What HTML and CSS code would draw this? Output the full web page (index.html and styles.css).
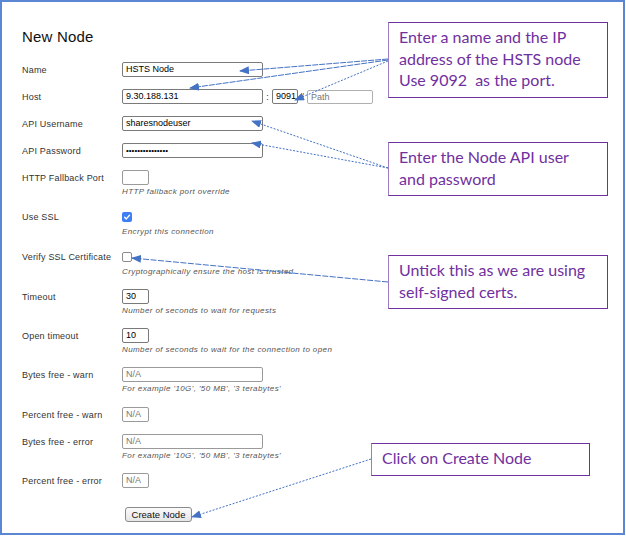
FILE: index.html
```html
<!DOCTYPE html>
<html>
<head>
<meta charset="utf-8">
<link rel="stylesheet" href="styles.css">
</head>
<body>
<div class="frame">
  <h1 class="title">New Node</h1>
  <form class="form">
    <div class="row">
      <label class="lbl">Name</label>
      <div class="ctl"><span class="inp wide">HSTS Node</span></div>
    </div>
    <div class="row">
      <label class="lbl">Host</label>
      <div class="ctl host">
        <span class="inp wide">9.30.188.131</span>
        <span class="sep">:</span>
        <span class="inp port">9091</span>
        <span class="sep">/</span>
        <span class="inp path ph">Path</span>
      </div>
    </div>
    <div class="row">
      <label class="lbl">API Username</label>
      <div class="ctl"><span class="inp wide">sharesnodeuser</span></div>
    </div>
    <div class="row">
      <label class="lbl">API Password</label>
      <div class="ctl"><span class="inp wide pw">•••••••••••••••</span></div>
    </div>
    <div class="row gap-lg">
      <label class="lbl">HTTP Fallback Port</label>
      <div class="ctl"><span class="inp small light"></span></div>
      <div class="hint">HTTP fallback port override</div>
    </div>
    <div class="row gap-lg">
      <label class="lbl">Use SSL</label>
      <div class="ctl"><span class="cb checked"><svg viewBox="0 0 10 10" width="10" height="10"><path d="M2.6 5.2 L4.3 6.9 L7.5 3.2" fill="none" stroke="#fff" stroke-width="1.4" stroke-linecap="round" stroke-linejoin="round"/></svg></span></div>
      <div class="hint hint-cb">Encrypt this connection</div>
    </div>
    <div class="row">
      <label class="lbl">Verify SSL Certificate</label>
      <div class="ctl"><span class="cb"></span></div>
      <div class="hint hint-cb">Cryptographically ensure the host is trusted</div>
    </div>
    <div class="row">
      <label class="lbl">Timeout</label>
      <div class="ctl"><span class="inp small">30</span></div>
      <div class="hint">Number of seconds to wait for requests</div>
    </div>
    <div class="row">
      <label class="lbl">Open timeout</label>
      <div class="ctl"><span class="inp small">10</span></div>
      <div class="hint">Number of seconds to wait for the connection to open</div>
    </div>
    <div class="row gap-md">
      <label class="lbl">Bytes free - warn</label>
      <div class="ctl"><span class="inp wide light ph">N/A</span></div>
      <div class="hint">For example '10G', '50 MB', '3 terabytes'</div>
    </div>
    <div class="row">
      <label class="lbl">Percent free - warn</label>
      <div class="ctl"><span class="inp small light ph">N/A</span></div>
    </div>
    <div class="row">
      <label class="lbl">Bytes free - error</label>
      <div class="ctl"><span class="inp wide light ph">N/A</span></div>
      <div class="hint">For example '10G', '50 MB', '3 terabytes'</div>
    </div>
    <div class="row gap-xl">
      <label class="lbl">Percent free - error</label>
      <div class="ctl"><span class="inp small light ph">N/A</span></div>
    </div>
    <div class="actions">
      <button type="button" class="btn">Create Node</button>
    </div>
  </form>

  <div class="callout c1">Enter a name and the IP<br>address of the HSTS node<br>Use 9092&nbsp; as the port.</div>
  <div class="callout c2">Enter the Node API user<br>and password</div>
  <div class="callout c3">Untick this as we are using<br>self-signed certs.</div>
  <div class="callout c4">Click on Create Node</div>

  <svg class="arrows" width="626" height="536" viewBox="0 0 626 536">
    <defs>
      <marker id="ah" markerWidth="10" markerHeight="8" refX="9" refY="4" orient="auto" markerUnits="userSpaceOnUse">
        <path d="M0 0 L10 4 L0 8 Z" fill="#4472c4"/>
      </marker>
    </defs>
    <g stroke="#4472c4" stroke-width="1" fill="none" marker-end="url(#ah)">
      <line x1="388" y1="59" x2="240" y2="71" stroke-dasharray="6 1"/>
      <line x1="388" y1="60" x2="190" y2="88" stroke-dasharray="6 1"/>
      <line x1="388" y1="61" x2="295" y2="100" stroke-dasharray="2 1.5"/>
      <line x1="388" y1="168" x2="252" y2="121" stroke-dasharray="2 1.5"/>
      <line x1="388" y1="168" x2="252" y2="143" stroke-dasharray="2 1.5"/>
      <line x1="388" y1="282" x2="132" y2="258" stroke-dasharray="6 1.5"/>
      <line x1="371" y1="459" x2="192" y2="517" stroke-dasharray="2 1.5"/>
    </g>
  </svg>
</div>
</body>
</html>
```

FILE: styles.css
```css
* { box-sizing: border-box; }
html, body { margin: 0; padding: 0; background: #fff; }

.frame {
  position: relative;
  width: 625px;
  height: 535px;
  border: 2px solid #5b86d4;
  background: #fff;
  padding: 25px 0 0 20px;
  font-family: "Liberation Sans", Arial, sans-serif;
  color: #222;
  overflow: hidden;
}

.title {
  margin: 0;
  font-size: 15px;
  font-weight: normal;
  line-height: 20px;
  color: #111;
  letter-spacing: 0.2px;
}

.form {
  margin-top: 15px;
  display: flex;
  flex-direction: column;
}

.row {
  display: grid;
  grid-template-columns: 100px auto;
  margin-bottom: 12px;
}
.row.gap-md { margin-bottom: 13px; }
.row.gap-lg { margin-bottom: 15px; }
.row.gap-xl { margin-bottom: 16px; }

.lbl {
  grid-column: 1;
  grid-row: 1;
  align-self: center;
  font-size: 9px;
  letter-spacing: 0.2px;
  color: #333;
  white-space: nowrap;
}

.ctl {
  grid-column: 2;
  grid-row: 1;
  display: flex;
  align-items: center;
}

.hint {
  grid-column: 2;
  grid-row: 2;
  margin-top: 2px;
  font-size: 8px;
  line-height: 10px;
  font-style: italic;
  color: #555;
  letter-spacing: 0.4px;
  white-space: nowrap;
}
.hint-cb { margin-top: 5px; }

.inp {
  display: inline-block;
  height: 15px;
  border: 1px solid #7a7a7a;
  border-radius: 2px;
  font-size: 9px;
  line-height: 13px;
  padding: 0 3px;
  color: #000;
  background: #fff;
  white-space: nowrap;
  overflow: hidden;
}
.inp.wide { width: 141px; }
.inp.small { width: 27px; }
.inp.port { width: 26px; }
.inp.path { width: 66px; height: 14px; line-height: 12px; }
.inp.light { border-color: #9a9a9a; }
.inp.path { border-color: #b0b0b0; }
.inp.ph { color: #777; }
.inp.pw { font-size: 8px; letter-spacing: 0; }

.host .sep {
  font-size: 9px;
  color: #333;
  width: 9px;
  text-align: center;
}

.cb {
  display: inline-block;
  width: 10px;
  height: 10px;
  border: 1px solid #8c8c8c;
  border-radius: 2px;
  background: #fff;
}
.cb.checked {
  border: none;
  background: #3d7ef5;
}
.cb svg { display: block; }

.actions {
  padding-left: 103px;
}
.btn {
  width: 67px;
  height: 15px;
  padding: 0;
  font-family: "Liberation Sans", Arial, sans-serif;
  font-size: 9.5px;
  line-height: 13px;
  color: #111;
  background: linear-gradient(#fafafa, #e6e6e6);
  border: 1px solid #8a8a8a;
  border-radius: 3px;
}

.callout {
  position: absolute;
  border: 1.5px solid #7030a0;
  border-left-color: #9d7cc4;
  background: #fff;
  color: #7030a0;
  font-family: Lato, "Open Sans", sans-serif;
  font-size: 16px;
  line-height: 21.5px;
  padding: 3px 6px 0 10px;
  white-space: nowrap;
}
.c1 { left: 386px; top: 20px; width: 220px; height: 76px; }
.c2 { left: 386px; top: 140px; width: 220px; height: 54px; }
.c3 { left: 386px; top: 253px; width: 220px; height: 54px; }
.c4 { left: 369px; top: 441px; width: 219px; height: 33px; }

.arrows {
  position: absolute;
  left: -2px;
  top: -2px;
  pointer-events: none;
}
```
